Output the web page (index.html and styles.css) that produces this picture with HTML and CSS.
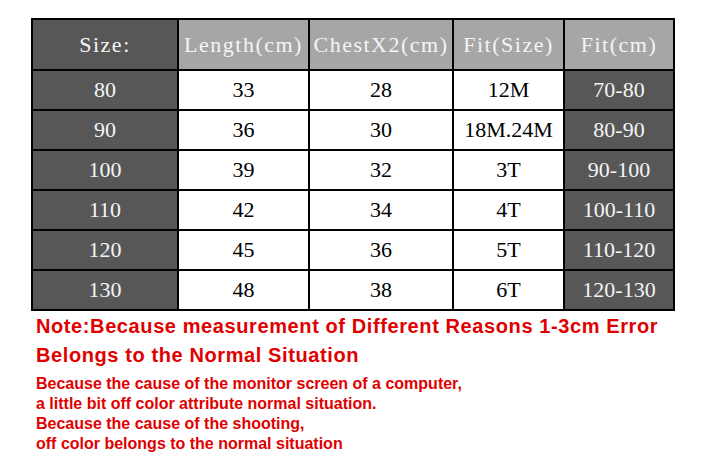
FILE: index.html
```html
<!DOCTYPE html>
<html>
<head>
<meta charset="utf-8">
<link rel="stylesheet" href="styles.css">
</head>
<body>
<div class="chart">
  <div class="cell head dark">Size:</div>
  <div class="cell head">Length(cm)</div>
  <div class="cell head">ChestX2(cm)</div>
  <div class="cell head">Fit(Size)</div>
  <div class="cell head">Fit(cm)</div>

  <div class="cell dark">80</div><div class="cell">33</div><div class="cell">28</div><div class="cell">12M</div><div class="cell dark">70-80</div>
  <div class="cell dark">90</div><div class="cell">36</div><div class="cell">30</div><div class="cell">18M.24M</div><div class="cell dark">80-90</div>
  <div class="cell dark">100</div><div class="cell">39</div><div class="cell">32</div><div class="cell">3T</div><div class="cell dark">90-100</div>
  <div class="cell dark">110</div><div class="cell">42</div><div class="cell">34</div><div class="cell">4T</div><div class="cell dark">100-110</div>
  <div class="cell dark">120</div><div class="cell">45</div><div class="cell">36</div><div class="cell">5T</div><div class="cell dark">110-120</div>
  <div class="cell dark">130</div><div class="cell">48</div><div class="cell">38</div><div class="cell">6T</div><div class="cell dark">120-130</div>
</div>
<div class="notes">
  <p class="note-big">Note:Because measurement of Different Reasons 1-3cm Error<br>Belongs to the Normal Situation</p>
  <p class="note-small">Because the cause of the monitor screen of a computer,<br>a little bit off color attribute normal situation.<br>Because the cause of the shooting,<br>off color belongs to the normal situation</p>
</div>
</body>
</html>
```
FILE: styles.css
```css
html, body {
  margin: 0;
  padding: 0;
  background: #ffffff;
}
body {
  padding: 18px 0 0 31px;
}
.chart {
  display: grid;
  grid-template-columns: 144px 129px 142px 109px 108px;
  grid-template-rows: 49px repeat(6, 38px);
  gap: 2px;
  padding: 2px;
  width: 644px;
  box-sizing: border-box;
  background: #000000;
}
.cell {
  display: flex;
  align-items: center;
  justify-content: center;
  background: #ffffff;
  color: #000000;
  font-family: "Liberation Serif", serif;
  font-size: 22px;
  white-space: nowrap;
}
.cell.head {
  background: #a6a6a6;
  color: #f4f4f4;
  font-size: 22px;
  letter-spacing: 1.5px;
}
.cell.dark {
  background: #575757;
  color: #f4f4f4;
}
.cell.head.dark {
  background: #575757;
}
.notes {
  color: #e00000;
  font-family: "Liberation Sans", Arial, sans-serif;
  font-weight: bold;
  padding-left: 5px;
}
.note-big {
  margin: 1px 0 0 0;
  font-size: 20px;
  line-height: 29px;
  letter-spacing: 0.6px;
}
.note-small {
  margin: 4px 0 0 0;
  font-size: 16px;
  line-height: 20px;
  letter-spacing: 0;
}
```
